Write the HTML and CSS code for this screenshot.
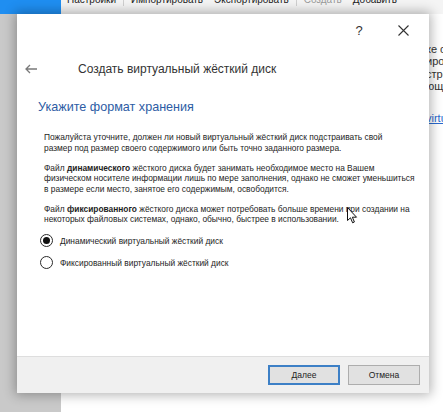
FILE: index.html
```html
<!DOCTYPE html>
<html lang="ru">
<head>
<meta charset="utf-8">
<title>Создать виртуальный жёсткий диск</title>
<link rel="stylesheet" href="styles.css">
</head>
<body>
<div class="screen">
  <div class="topbar">
    <div class="brand"></div>
    <div class="toolbar">
      <span>Настройки</span><span class="sep"></span><span>Импортировать</span><span class="spaced">Экспортировать</span><span class="sep"></span><span class="dim">Создать</span><span class="spaced">Добавить</span>
    </div>
  </div>
  <div class="main">
    <div class="sidebar"></div>
    <div class="content">
      <div class="lines">
        <div>ке сохр</div>
        <div>ировани</div>
        <div>стройки</div>
        <div>ющих</div>
      </div>
      <div class="link">virtual</div>
    </div>
  </div>

  <div class="dialog">
    <div class="titlebar">
      <div class="tb-btn help">?</div>
      <div class="tb-btn">
        <svg width="11" height="11" viewBox="0 0 11 11"><path d="M0.5 0.5 L10.5 10.5 M10.5 0.5 L0.5 10.5" stroke="#333" stroke-width="1.1" fill="none"/></svg>
      </div>
    </div>
    <div class="header">
      <svg class="back" width="12" height="10" viewBox="0 0 12 10"><path d="M12 5 H1.2 M5 1 L1 5 L5 9" stroke="#7a7a7a" stroke-width="1.3" fill="none"/></svg>
      <h1>Создать виртуальный жёсткий диск</h1>
    </div>
    <div class="body">
      <h2>Укажите формат хранения</h2>
      <div class="desc">
        <p>Пожалуйста уточните, должен ли новый виртуальный жёсткий диск подстраивать свой<br>размер под размер своего содержимого или быть точно заданного размера.</p>
        <p>Файл <b>динамического</b> жёсткого диска будет занимать необходимое место на Вашем<br>физическом носителе информации лишь по мере заполнения, однако не сможет уменьшиться<br>в размере если место, занятое его содержимым, освободится.</p>
        <p>Файл <b>фиксированного</b> жёсткого диска может потребовать больше времени при создании на<br>некоторых файловых системах, однако, обычно, быстрее в использовании.</p>
      </div>
      <div class="radios">
        <div class="radio"><span class="circle checked"></span><span>Динамический виртуальный жёсткий диск</span></div>
        <div class="radio"><span class="circle"></span><span>Фиксированный виртуальный жёсткий диск</span></div>
      </div>
    </div>
    <div class="footer">
      <div class="btn primary">Далее</div>
      <div class="btn">Отмена</div>
    </div>
  </div>

  <svg class="cursor" width="11" height="17" viewBox="0 0 11 17"><path d="M0.5 0.5 V13.5 L3.5 10.8 L5.6 15.8 L7.4 15 L5.4 10.2 H9.5 Z" fill="#fff" stroke="#111" stroke-width="1"/></svg>
</div>
</body>
</html>
```
FILE: styles.css
```css
html, body {
  margin: 0;
  padding: 0;
}
body {
  width: 443px;
  height: 412px;
  overflow: hidden;
  font-family: "Liberation Sans", Arial, sans-serif;
  background: #fff;
}
.screen {
  position: relative;
  width: 443px;
  height: 412px;
  display: grid;
  grid-template-rows: 14px 1fr;
  overflow: hidden;
}
.topbar {
  display: flex;
  overflow: hidden;
  background: #f4f4f4;
}
.brand {
  width: 61px;
  background: #1f8ef1;
}
.toolbar {
  display: flex;
  align-items: flex-start;
  gap: 7px;
  padding-left: 6px;
  margin-top: -6px;
  font-size: 10px;
  line-height: 12px;
  color: #222;
  white-space: nowrap;
}
.toolbar .sep {
  width: 1px;
  height: 12px;
  background: #cfcfcf;
}
.toolbar .spaced {
  margin-left: 4px;
}
.toolbar .dim {
  color: #9a9a9a;
}
.main {
  display: flex;
}
.sidebar {
  width: 61px;
  background: #c9c9c9;
}
.content {
  flex: 1;
  padding: 29px 0 0 365px;
  font-size: 11px;
  line-height: 12.3px;
  color: #333;
  white-space: nowrap;
  overflow: hidden;
}
.link {
  margin-top: 20px;
  color: #2a6ad0;
  text-decoration: underline;
}

.dialog {
  position: absolute;
  left: 17px;
  top: 14px;
  width: 412px;
  height: 379px;
  background: #fff;
  box-shadow: 0 0 11px 2px rgba(0, 0, 0, 0.3);
  display: flex;
  flex-direction: column;
}
.titlebar {
  height: 32px;
  display: flex;
  justify-content: flex-end;
  padding-right: 4px;
}
.tb-btn {
  width: 44px;
  display: flex;
  align-items: center;
  justify-content: center;
  color: #333;
}
.tb-btn.help {
  font-size: 13px;
}
.header {
  height: 46px;
  display: flex;
  align-items: center;
  padding-left: 8px;
}
.back {
  margin-right: 41px;
}
.header h1 {
  margin: 0;
  font-size: 12px;
  font-weight: normal;
  color: #333;
}
.body {
  flex: 1;
  padding: 6px 0 0 21px;
}
.body h2 {
  margin: 0;
  font-size: 12.6px;
  line-height: 18px;
  font-weight: normal;
  color: #2d5ca4;
}
.desc {
  margin: 16px 0 0 6px;
  width: 380px;
  font-size: 8.4px;
  line-height: 10.5px;
  color: #1e1e1e;
  white-space: nowrap;
}
.desc p {
  margin: 0 0 9.5px;
}
.desc p:last-child {
  margin-bottom: 0;
}
.radios {
  margin: 5px 0 0 2px;
  display: flex;
  flex-direction: column;
  font-size: 8.4px;
  color: #1e1e1e;
}
.radio {
  height: 22px;
  display: flex;
  align-items: center;
  gap: 7px;
}
.circle {
  width: 13px;
  height: 13px;
  box-sizing: border-box;
  border: 1.3px solid #2a2a2a;
  border-radius: 50%;
  display: flex;
  align-items: center;
  justify-content: center;
}
.circle.checked::after {
  content: "";
  width: 7px;
  height: 7px;
  border-radius: 50%;
  background: #111;
}
.footer {
  height: 37px;
  box-sizing: border-box;
  background: #f0f0f0;
  border-top: 1px solid #dedede;
  display: flex;
  justify-content: flex-end;
  align-items: center;
  gap: 8px;
  padding-right: 9px;
}
.btn {
  width: 72px;
  height: 20px;
  box-sizing: border-box;
  border: 1px solid #adadad;
  background: #e1e1e1;
  font-size: 8.5px;
  color: #222;
  display: flex;
  align-items: center;
  justify-content: center;
}
.btn.primary {
  border: 2px solid #3d80c6;
}
.cursor {
  position: absolute;
  left: 347px;
  top: 207px;
}
```
